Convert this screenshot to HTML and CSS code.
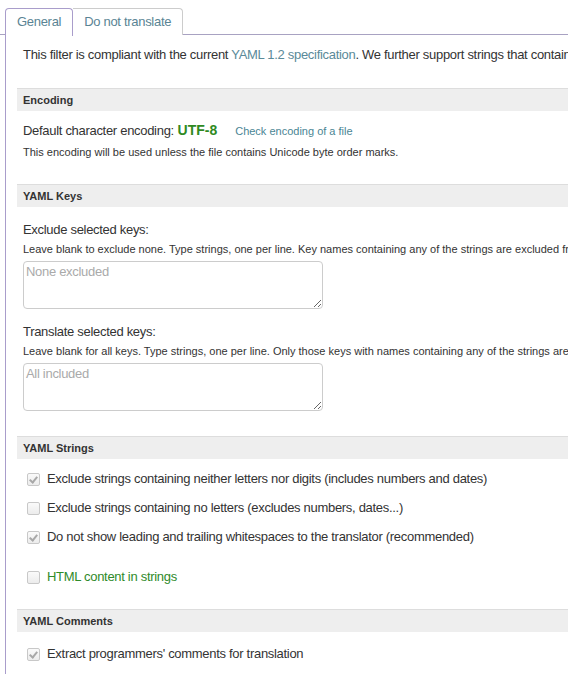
FILE: index.html
```html
<!DOCTYPE html>
<html>
<head>
<meta charset="utf-8">
<link rel="stylesheet" href="styles.css">
</head>
<body>
<div class="page">
  <div class="tabs">
    <div class="tab active">General</div>
    <div class="tab">Do not translate</div>
  </div>
  <div class="panel">
    <p class="intro">This filter is compliant with the current <a class="link">YAML 1.2 specification</a>. We further support strings that contain HTML content and comments.</p>

    <div class="section-head">Encoding</div>
    <div class="section-body">
      <div class="enc-line"><span class="big">Default character encoding:</span> <span class="utf">UTF-8</span><a class="link small check">Check encoding of a file</a></div>
      <div class="help enc-help">This encoding will be used unless the file contains Unicode byte order marks.</div>
    </div>

    <div class="section-head">YAML Keys</div>
    <div class="section-body keys">
      <div class="big field-label">Exclude selected keys:</div>
      <div class="help">Leave blank to exclude none. Type strings, one per line. Key names containing any of the strings are excluded from translation.</div>
      <textarea class="ta" placeholder="None excluded"></textarea>
      <div class="big field-label second">Translate selected keys:</div>
      <div class="help">Leave blank for all keys. Type strings, one per line. Only those keys with names containing any of the strings are translated.</div>
      <textarea class="ta" placeholder="All included"></textarea>
    </div>

    <div class="section-head strings-head">YAML Strings</div>
    <div class="section-body checks">
      <div class="row"><span class="cb checked"></span><span>Exclude strings containing neither letters nor digits (includes numbers and dates)</span></div>
      <div class="row"><span class="cb"></span><span>Exclude strings containing no letters (excludes numbers, dates...)</span></div>
      <div class="row"><span class="cb checked"></span><span>Do not show leading and trailing whitespaces to the translator (recommended)</span></div>
      <div class="row html-row"><span class="cb"></span><span class="green">HTML content in strings</span></div>
    </div>

    <div class="section-head comments-head">YAML Comments</div>
    <div class="section-body checks comments-body">
      <div class="row"><span class="cb checked"></span><span>Extract programmers' comments for translation</span></div>
    </div>
  </div>
</div>
</body>
</html>
```

FILE: styles.css
```css
html, body {
  margin: 0;
  padding: 0;
  background: #fff;
  overflow: hidden;
}
body {
  width: 568px;
  height: 674px;
  font-family: "Liberation Sans", Arial, sans-serif;
  color: #333;
}
.page {
  width: 900px;
}
.tabs {
  display: flex;
  padding: 8px 0 0 5px;
  border-bottom: 1px solid #a8a2c2;
  height: 26px;
}
.tab {
  height: 26px;
  line-height: 26px;
  font-size: 13px;
  letter-spacing: -0.3px;
  color: #5a8494;
  padding: 0 11px;
  border: 1px solid #ccc;
  border-bottom: none;
  border-left: none;
  border-radius: 0 4px 0 0;
  background: #fff;
}
.tab.active {
  border: 1px solid #a99dcb;
  border-bottom: none;
  border-radius: 4px 4px 0 0;
  height: 27px;
  margin-bottom: -1px;
  position: relative;
  padding: 0 11px;
}
.panel {
  margin-left: 5px;
  border-left: 1px solid #a99dcb;
  padding-left: 11px;
  min-height: 700px;
}
.intro {
  margin: 0;
  padding: 11px 6px 0;
  font-size: 13px;
  letter-spacing: -0.3px;
  line-height: 18px;
  white-space: nowrap;
}
.link {
  color: #5a8a99;
  text-decoration: none;
}
.small {
  font-size: 11px;
  letter-spacing: 0;
}
.section-head {
  margin-top: 24px;
  border-top: 1px solid #ddd;
  background: #eee;
  height: 22px;
  line-height: 22px;
  padding: 0 6px;
  font-size: 11px;
  font-weight: bold;
  color: #333;
}
.section-body {
  padding: 10px 6px 0;
}
.big {
  font-size: 13px;
  letter-spacing: -0.3px;
  line-height: 18px;
}
.enc-line {
  font-size: 13px;
  line-height: 18px;
  white-space: nowrap;
}
.utf {
  font-size: 14px;
  font-weight: bold;
  color: #2f8a1f;
}
.check {
  margin-left: 18px;
  color: #4a8594;
}
.help {
  font-size: 11px;
  line-height: 15px;
  white-space: nowrap;
}
.enc-help {
  margin-top: 5px;
}
.keys {
  padding-top: 14px;
}
.keys .help {
  margin-top: 3px;
}
.ta {
  display: block;
  box-sizing: border-box;
  width: 300px;
  height: 48px;
  margin-top: 4px;
  border: 1px solid #ccc;
  border-radius: 4px;
  padding: 2px 2px;
  font-family: "Liberation Sans", Arial, sans-serif;
  font-size: 13px;
  letter-spacing: -0.3px;
  color: #333;
  background: #fff;
}
.ta::placeholder {
  color: #aaa;
}
.field-label.second {
  margin-top: 14px;
}
.strings-head {
  margin-top: 25px;
}
.comments-head {
  margin-top: 23px;
}
.checks {
  padding: 11px 6px 0;
  display: flex;
  flex-direction: column;
  gap: 11px;
}
.comments-body {
  padding-top: 13px;
}
.row {
  display: flex;
  align-items: center;
  gap: 7px;
  font-size: 13px;
  letter-spacing: -0.3px;
  line-height: 18px;
  padding-left: 4px;
  white-space: nowrap;
}
.row.html-row {
  margin-top: 11px;
}
.cb {
  box-sizing: border-box;
  width: 13px;
  height: 13px;
  border: 1px solid #c8c8c8;
  border-radius: 2px;
  background: linear-gradient(#fafafa, #ececec);
  flex: none;
  position: relative;
}
.cb.checked::after {
  content: "";
  position: absolute;
  left: 3px;
  top: 1px;
  width: 3px;
  height: 6px;
  border-right: 2px solid #a8a8a8;
  border-bottom: 2px solid #a8a8a8;
  transform: rotate(40deg);
}
.green {
  color: #2f8a2a;
}
```
